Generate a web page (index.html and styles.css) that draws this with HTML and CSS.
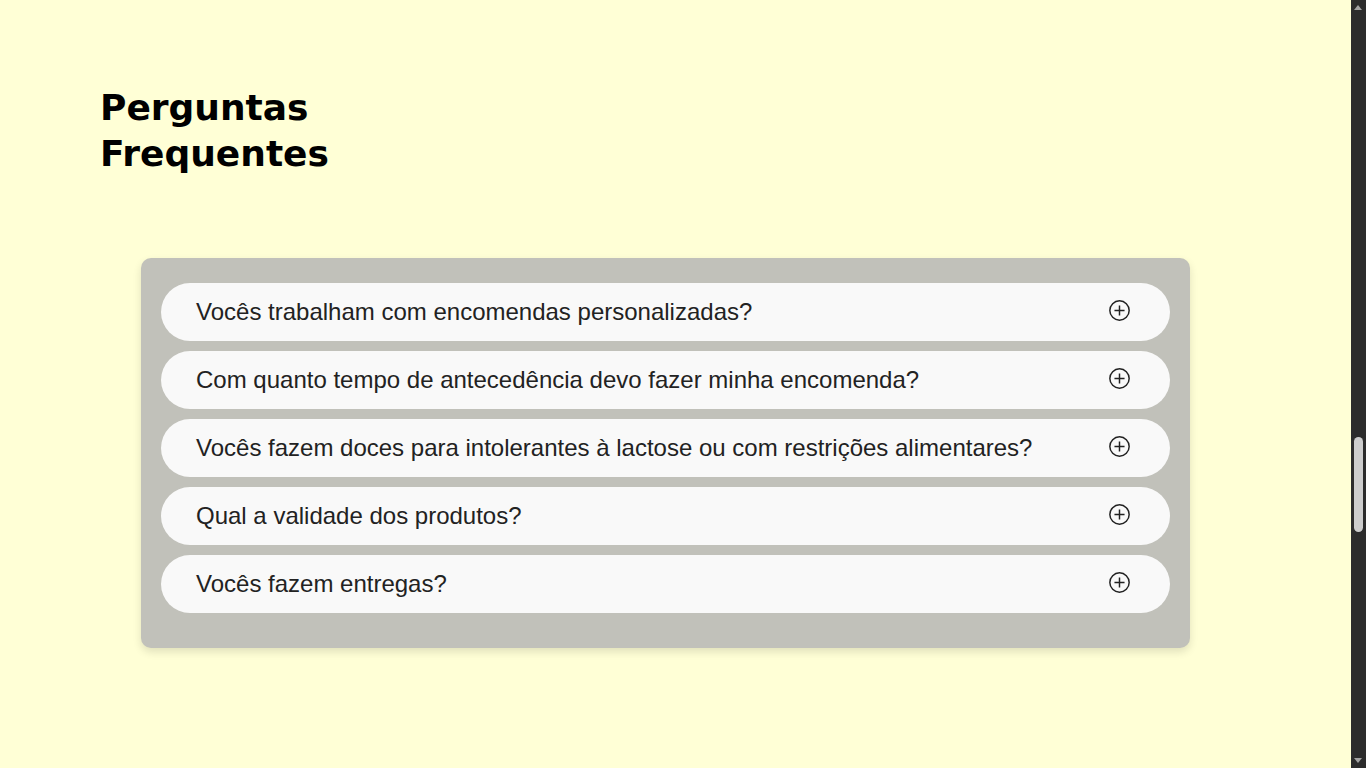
FILE: index.html
```html
<!DOCTYPE html>
<html lang="pt-BR">
<head>
    <meta charset="UTF-8">
    <meta name="viewport" content="width=device-width, initial-scale=1.0">
    <title>Perguntas Frequentes</title>
    <link rel="stylesheet" href="styles.css">
</head>
<body>

<section class="faq">
    <h2 class="faq-title">Perguntas<br>Frequentes</h2>

    <div class="faq-box">
        <div class="faq-item">
            <span>Vocês trabalham com encomendas personalizadas?</span>
            <svg class="faq-icon" viewBox="0 0 20 20"><circle cx="10" cy="10" r="9.2"/><path d="M10 5.2v9.6M5.2 10h9.6"/></svg>
        </div>
        <div class="faq-item">
            <span>Com quanto tempo de antecedência devo fazer minha encomenda?</span>
            <svg class="faq-icon" viewBox="0 0 20 20"><circle cx="10" cy="10" r="9.2"/><path d="M10 5.2v9.6M5.2 10h9.6"/></svg>
        </div>
        <div class="faq-item">
            <span>Vocês fazem doces para intolerantes à lactose ou com restrições alimentares?</span>
            <svg class="faq-icon" viewBox="0 0 20 20"><circle cx="10" cy="10" r="9.2"/><path d="M10 5.2v9.6M5.2 10h9.6"/></svg>
        </div>
        <div class="faq-item">
            <span>Qual a validade dos produtos?</span>
            <svg class="faq-icon" viewBox="0 0 20 20"><circle cx="10" cy="10" r="9.2"/><path d="M10 5.2v9.6M5.2 10h9.6"/></svg>
        </div>
        <div class="faq-item">
            <span>Vocês fazem entregas?</span>
            <svg class="faq-icon" viewBox="0 0 20 20"><circle cx="10" cy="10" r="9.2"/><path d="M10 5.2v9.6M5.2 10h9.6"/></svg>
        </div>
    </div>
</section>

<!-- barra de rolagem escura -->
<div class="scrollbar" aria-hidden="true">
    <span class="scroll-arrow up"></span>
    <span class="scroll-thumb"></span>
    <span class="scroll-arrow down"></span>
</div>

</body>
</html>
```

FILE: styles.css
```css
        html {
            overflow: hidden;
        }
        body {
            margin: 0;
            padding: 0;
            background-color: #ffffd6;
            color: #222;
            font-family: "Liberation Sans", Arial, sans-serif;
        }
        .faq {
            padding: 85px 100px 120px;
        }
        .faq-title {
            margin: 0 0 81px;
            font-family: "DejaVu Sans", sans-serif;
            font-weight: bold;
            font-size: 36px;
            line-height: 46px;
            color: #000;
        }
        .faq-box {
            width: 1049px;
            margin-left: 41px;
            box-sizing: border-box;
            padding: 25px 20px;
            background-color: #c1c1ba;
            border-radius: 10px;
            box-shadow: 0 4px 8px rgba(0, 0, 0, 0.12);
        }
        .faq-item {
            display: flex;
            align-items: center;
            justify-content: space-between;
            height: 58px;
            padding: 0 40px 0 35px;
            margin-bottom: 10px;
            background-color: #f9f9f9;
            border-radius: 29px;
            font-size: 24px;
            color: #222;
        }
        .faq-icon {
            width: 21px;
            height: 21px;
            margin-bottom: 4px;
            fill: none;
            stroke: #222;
            stroke-width: 1.4;
        }
        .scrollbar {
            position: fixed;
            top: 0;
            right: 0;
            bottom: 0;
            width: 15px;
            background-color: #2c2c2c;
        }
        .scroll-thumb {
            position: absolute;
            top: 437px;
            left: 3px;
            width: 9px;
            height: 95px;
            border-radius: 5px;
            background-color: #cdcdcd;
        }
        .scroll-arrow {
            position: absolute;
            left: 3px;
            width: 0;
            height: 0;
            border-left: 4.5px solid transparent;
            border-right: 4.5px solid transparent;
        }
        .scroll-arrow.up {
            top: 5px;
            border-bottom: 5px solid #a3a3a3;
        }
        .scroll-arrow.down {
            bottom: 5px;
            border-top: 5px solid #a3a3a3;
        }
```
